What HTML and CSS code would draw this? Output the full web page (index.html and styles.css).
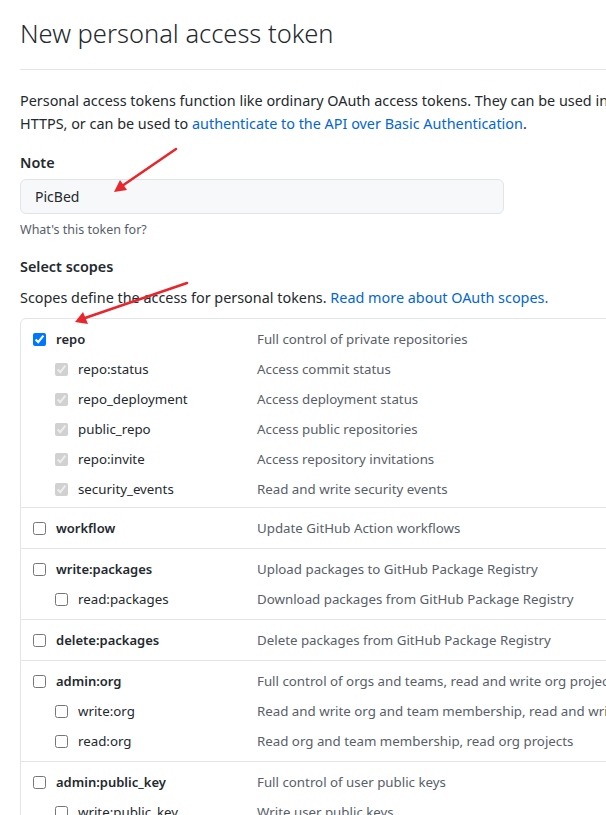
FILE: index.html
```html
<!DOCTYPE html>
<html>
<head>
<meta charset="utf-8">
<link rel="stylesheet" href="styles.css">
</head>
<body>
<div class="page">
  <h1 class="title">New personal access token</h1>
  <p class="intro">Personal access tokens function like ordinary OAuth access tokens. They can be used instead of a password for Git over<br>HTTPS, or can be used to <a href="#">authenticate to the API over Basic Authentication</a>.</p>

  <div class="field">
    <label class="label">Note</label>
    <input class="note-input" type="text" value="PicBed">
    <p class="hint">What's this token for?</p>
  </div>

  <div class="field">
    <div class="label">Select scopes</div>
    <p class="desc-text">Scopes define the access for personal tokens. <a href="#">Read more about OAuth scopes.</a></p>
    <div class="scopes">
      <div class="group">
        <div class="row top"><span class="name"><input type="checkbox" checked>repo</span><span class="desc">Full control of private repositories</span></div>
        <div class="row sub"><span class="name"><input type="checkbox" checked disabled>repo:status</span><span class="desc">Access commit status</span></div>
        <div class="row sub"><span class="name"><input type="checkbox" checked disabled>repo_deployment</span><span class="desc">Access deployment status</span></div>
        <div class="row sub"><span class="name"><input type="checkbox" checked disabled>public_repo</span><span class="desc">Access public repositories</span></div>
        <div class="row sub"><span class="name"><input type="checkbox" checked disabled>repo:invite</span><span class="desc">Access repository invitations</span></div>
        <div class="row sub"><span class="name"><input type="checkbox" checked disabled>security_events</span><span class="desc">Read and write security events</span></div>
      </div>
      <div class="group">
        <div class="row top"><span class="name"><input type="checkbox">workflow</span><span class="desc">Update GitHub Action workflows</span></div>
      </div>
      <div class="group">
        <div class="row top"><span class="name"><input type="checkbox">write:packages</span><span class="desc">Upload packages to GitHub Package Registry</span></div>
        <div class="row sub"><span class="name"><input type="checkbox">read:packages</span><span class="desc">Download packages from GitHub Package Registry</span></div>
      </div>
      <div class="group">
        <div class="row top"><span class="name"><input type="checkbox">delete:packages</span><span class="desc">Delete packages from GitHub Package Registry</span></div>
      </div>
      <div class="group">
        <div class="row top"><span class="name"><input type="checkbox">admin:org</span><span class="desc">Full control of orgs and teams, read and write org projects</span></div>
        <div class="row sub"><span class="name"><input type="checkbox">write:org</span><span class="desc">Read and write org and team membership, read and write org projects</span></div>
        <div class="row sub"><span class="name"><input type="checkbox">read:org</span><span class="desc">Read org and team membership, read org projects</span></div>
      </div>
      <div class="group">
        <div class="row top"><span class="name"><input type="checkbox">admin:public_key</span><span class="desc">Full control of user public keys</span></div>
        <div class="row sub"><span class="name"><input type="checkbox">write:public_key</span><span class="desc">Write user public keys</span></div>
        <div class="row sub"><span class="name"><input type="checkbox">read:public_key</span><span class="desc">Read user public keys</span></div>
      </div>
    </div>
  </div>
</div>

<svg class="annot" width="606" height="815" viewBox="0 0 606 815">
  <g stroke="#e8262c" stroke-width="2.6" stroke-linecap="round" fill="none">
    <line x1="176" y1="149" x2="122" y2="186"/>
    <line x1="187" y1="283" x2="85" y2="318"/>
  </g>
  <g fill="#e8262c">
    <polygon points="114,192 120,180 127,190"/>
    <polygon points="75,322 83,312 88,324"/>
  </g>
</svg>
</body>
</html>
```

FILE: styles.css
```css
html, body {
  margin: 0;
  padding: 0;
  overflow: hidden;
  background: #fff;
}
body {
  font-family: "Noto Sans", "Open Sans", sans-serif;
  font-size: 14.4px;
  color: #24292e;
  line-height: 1.5;
  position: relative;
  width: 606px;
  height: 815px;
}
.page {
  width: 900px;
  padding: 0 0 0 20px;
}
a {
  color: #0366d6;
  text-decoration: none;
}
.title {
  margin: 0;
  padding: 14px 0 17px;
  font-size: 25.5px;
  font-weight: 300;
  line-height: 38px;
  border-bottom: 1px solid #e1e4e8;
}
.intro {
  margin: 19px 0 17px;
  line-height: 23px;
}
.field {
  margin-bottom: 17px;
}
.label {
  display: block;
  font-weight: 600;
  margin: 0 0 6px;
  line-height: 21px;
}
.note-input {
  display: block;
  box-sizing: border-box;
  width: 484px;
  height: 35px;
  padding: 5px 14px;
  font: inherit;
  font-size: 14px;
  color: #24292e;
  background: #f6f8fa;
  border: 1px solid #e1e4e8;
  border-radius: 6px;
  outline: none;
}
.hint {
  margin: 7px 0 0;
  font-size: 12.5px;
  color: #586069;
  line-height: 18px;
}
.desc-text {
  margin: 10px 0 10px;
  line-height: 21px;
}
.scopes {
  border: 1px solid #e1e4e8;
  border-radius: 6px;
  width: 860px;
  font-size: 13.3px;
}
.group {
  padding: 10px 0 9px 12px;
  border-top: 1px solid #e1e4e8;
}
.group:first-child {
  border-top: none;
  padding-bottom: 6.5px;
}
.row {
  display: flex;
  line-height: 21px;
}
.row.sub {
  margin-top: 9px;
}
.name {
  display: flex;
  align-items: center;
  width: 224px;
  flex: none;
}
.row.top .name {
  font-weight: 600;
  font-size: 13px;
}
.row.sub .name {
  padding-left: 22px;
  width: 202px;
}
.name input {
  margin: 0 10px 0 0;
  width: 13px;
  height: 13px;
}
.desc {
  color: #586069;
  white-space: nowrap;
}
.annot {
  position: absolute;
  left: 0;
  top: 0;
  pointer-events: none;
}
```
